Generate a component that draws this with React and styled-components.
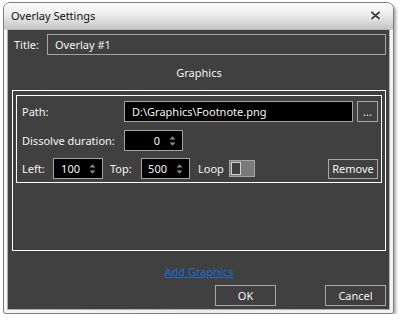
import React from 'react';
import styled, { createGlobalStyle } from 'styled-components';

const GlobalStyle = createGlobalStyle`
  html, body {
    margin: 0;
    padding: 0;
    background: #ffffff;
  }
  body {
    font-family: "Noto Sans", "Segoe UI", sans-serif;
    font-size: 11px;
  }
  * {
    box-sizing: border-box;
  }
`;

const Window = styled.div`
  margin: 2px 0 0 3px;
  width: 391px;
  height: 312px;
  border: 1px solid #7c7c7c;
  border-radius: 7px 7px 3px 3px;
  background: linear-gradient(to right, #f6f6f6, #ececec 50%, #f4f4f4);
  box-shadow: 2px 2px 3px rgba(0, 0, 0, 0.35);
  padding: 0 4px 4px;
  display: flex;
  flex-direction: column;
  overflow: hidden;
`;

const TitleBar = styled.div`
  height: 27px;
  margin: 0 -4px;
  display: flex;
  align-items: center;
  justify-content: space-between;
  padding: 0 12px 2px 7px;
  background: linear-gradient(
    to bottom,
    #fafafa 0,
    #f0f0f0 35%,
    #d6d6d6 75%,
    #c6c6c6 92%,
    #dedede 100%
  );
`;

const Caption = styled.span`
  font-size: 11px;
  color: #111;
`;

const Body = styled.div`
  flex: 1;
  display: flex;
  flex-direction: column;
  background: #404040;
  box-shadow: 0 0 0 1px #b0b0b0;
  padding: 4px 3px 3px 4px;
  color: #f4f4f4;
`;

const TitleRow = styled.div`
  display: flex;
  align-items: center;
  height: 21px;
  padding-left: 2px;
`;

const Label = styled.span`
  flex: none;
  width: ${(p) => p.$w || 'auto'};
  margin-left: ${(p) => p.$ml || 0};
  white-space: nowrap;
`;

const TextBox = styled.div`
  flex: 1;
  height: 21px;
  display: flex;
  align-items: center;
  padding: 0 7px;
  border: 1px solid #a4a4a4;
  background: ${(p) => (p.$black ? '#000' : 'transparent')};
  white-space: nowrap;
`;

const SectionTitle = styled.div`
  margin-top: 10px;
  height: 16px;
  line-height: 16px;
  text-align: center;
`;

const GroupBox = styled.div`
  margin-top: 9px;
  height: 161px;
  border: 1px solid #ffffff;
  padding: 4px 3px;
`;

const ItemBox = styled.div`
  border: 1px solid #ffffff;
  padding: 5px 3px 3px 5px;
  display: flex;
  flex-direction: column;
`;

const Row = styled.div`
  display: flex;
  align-items: center;
  height: 21px;
  margin-top: ${(p) => p.$gap || 0};
`;

const Spin = styled.div`
  flex: none;
  width: ${(p) => p.$w};
  height: 21px;
  display: flex;
  align-items: center;
  background: #000;
  border: 1px solid #a4a4a4;
`;

const SpinValue = styled.span`
  flex: 1;
  text-align: right;
`;

const Arrows = styled.svg`
  flex: none;
  margin: 0 6px 0 9px;
`;

const Toggle = styled.div`
  flex: none;
  width: 26px;
  height: 17px;
  border: 1px solid #a6a6a6;
  background: #7a7a7a;
  padding: 1px;
`;

const Thumb = styled.div`
  width: 10px;
  height: 100%;
  border: 1px solid #d4d4d4;
  background: #404040;
`;

const Button = styled.div`
  flex: none;
  width: ${(p) => p.$w};
  height: ${(p) => p.$h || '21px'};
  margin-left: ${(p) => p.$ml || 0};
  display: flex;
  align-items: center;
  justify-content: center;
  border: 1px solid #a8a8a8;
  color: #f4f4f4;
`;

const AddLink = styled.div`
  margin-top: 13px;
  height: 16px;
  line-height: 16px;
  text-align: center;
  color: #1a6ad4;
  text-decoration: underline;
`;

const Footer = styled.div`
  margin-top: 5px;
  display: flex;
  justify-content: flex-end;
  gap: 49px;
`;

function CloseIcon() {
  return (
    <svg width="11" height="9" viewBox="0 0 11 9">
      <path d="M2 1.5 L9 7.5 M9 1.5 L2 7.5" stroke="#ffffff" strokeWidth="4" strokeLinecap="round" />
      <path d="M2 1.5 L9 7.5 M9 1.5 L2 7.5" stroke="#444444" strokeWidth="2.2" strokeLinecap="round" />
    </svg>
  );
}

function SpinArrows() {
  return (
    <Arrows width="7" height="12" viewBox="0 0 7 12">
      <polygon points="0.5,4.5 3.5,1.2 6.5,4.5" fill="#8a8a8a" />
      <polygon points="0.5,7.5 3.5,10.8 6.5,7.5" fill="#8a8a8a" />
    </Arrows>
  );
}

export default function App() {
  return (
    <>
      <GlobalStyle />
      <Window>
        <TitleBar>
          <Caption>Overlay Settings</Caption>
          <CloseIcon />
        </TitleBar>
        <Body>
          <TitleRow>
            <Label $w="33px">Title:</Label>
            <TextBox>Overlay #1</TextBox>
          </TitleRow>

          <SectionTitle>Graphics</SectionTitle>

          <GroupBox>
            <ItemBox>
              <Row>
                <Label $w="102px">Path:</Label>
                <TextBox $black>D:\Graphics\Footnote.png</TextBox>
                <Button $w="21px" $ml="4px">...</Button>
              </Row>
              <Row $gap="8px">
                <Label $w="102px">Dissolve duration:</Label>
                <Spin $w="59px">
                  <SpinValue>0</SpinValue>
                  <SpinArrows />
                </Spin>
              </Row>
              <Row $gap="7px">
                <Label $w="31px">Left:</Label>
                <Spin $w="50px">
                  <SpinValue>100</SpinValue>
                  <SpinArrows />
                </Spin>
                <Label $w="31px" $ml="7px">Top:</Label>
                <Spin $w="49px">
                  <SpinValue>500</SpinValue>
                  <SpinArrows />
                </Spin>
                <Label $w="31px" $ml="8px">Loop</Label>
                <Toggle>
                  <Thumb />
                </Toggle>
                <Button $w="50px" $h="20px" $ml="auto">Remove</Button>
              </Row>
            </ItemBox>
          </GroupBox>

          <AddLink>Add Graphics</AddLink>

          <Footer>
            <Button $w="61px">OK</Button>
            <Button $w="61px">Cancel</Button>
          </Footer>
        </Body>
      </Window>
    </>
  );
}
